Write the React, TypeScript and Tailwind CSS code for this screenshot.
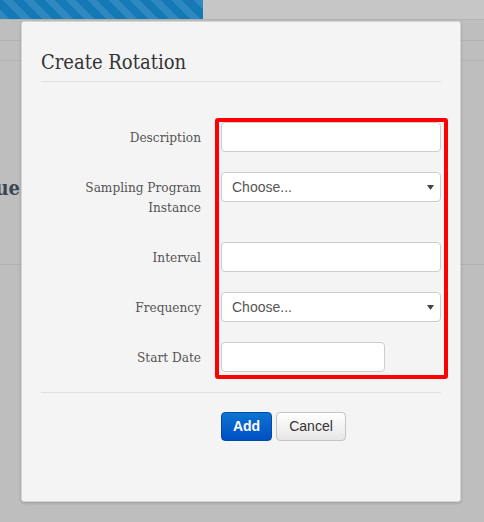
import React from "react";

const serif = "font-['DejaVu_Serif_Condensed','DejaVu_Serif',serif]";

function Select() {
  return (
    <div className="relative h-[30px] w-[220px] rounded-[4px] border border-[#cccccc] bg-white">
      <span className="absolute left-[10px] top-[5px] text-[14px] leading-[18px] text-[#555555] font-['Liberation_Sans',Arial,sans-serif]">
        Choose...
      </span>
      <svg className="absolute right-[6px] top-[11px]" width="7" height="7" viewBox="0 0 7 7">
        <path d="M0 1 L7 1 L3.5 6 Z" fill="#444" />
      </svg>
    </div>
  );
}

function Input({ w = "w-[220px]" }: { w?: string }) {
  return <div className={`h-[30px] ${w} rounded-[4px] border border-[#cccccc] bg-white`} />;
}

function Label({ children }: { children: React.ReactNode }) {
  return (
    <div className={`text-right py-[5px] text-[13.5px] leading-[20px] text-[#555555] ${serif}`}>{children}</div>
  );
}

export default function App() {
  return (
    <div className="relative w-[484px] h-[522px] overflow-hidden bg-[#bebebe]">
      {/* background page */}
      <div className="flex h-[19px]">
        <div className="w-[203px] bg-[repeating-linear-gradient(45deg,#2d89bf_0px,#2d89bf_7px,#1479b4_7px,#1479b4_15px)]" />
        <div className="flex-1 bg-[#c6c6c6]" />
      </div>
      <div className="h-px bg-[#b3b3b3]" />
      <div className="h-[20px]" />
      <div className="h-px bg-[#b3b3b3]" />
      <div className="h-[19px]" />
      <div className="h-px bg-[#b3b3b3]" />
      <div className="h-[203px] pt-[113px]">
        <div className="flex w-[20px] justify-end overflow-visible">
          <span className={`whitespace-nowrap text-[20px] leading-[28px] font-bold text-[#3b4652] ${serif}`}>Que</span>
        </div>
      </div>
      <div className="h-px bg-[#b0b0b0]" />

      {/* modal overlay */}
      <div className="absolute left-[21px] top-[21px] w-[440px] h-[481px] rounded-[3px] border border-[#d6d6d6] bg-[#f4f4f4] shadow-[0_1px_3px_rgba(0,0,0,0.2)] px-[19px] pt-[26px]">
        <div className={`text-[20px] leading-[28px] text-[#333333] ${serif}`}>Create Rotation</div>
        <div className="mt-[5px] h-px bg-[#e0e0e0]" />

        <div className="relative mt-[40px] grid grid-cols-[160px_220px] gap-x-[20px] gap-y-[20px]">
          <Label>Description</Label>
          <Input />
          <Label>
            Sampling Program
            <br />
            Instance
          </Label>
          <Select />
          <Label>Interval</Label>
          <Input />
          <Label>Frequency</Label>
          <Select />
          <Label>Start Date</Label>
          <Input w="w-[164px]" />

          <div className="pointer-events-none absolute left-[174px] top-[-4px] w-[233px] h-[261px] rounded-[3px] border-4 border-[#ff0000]" />
        </div>

        <div className="mt-[20px] h-px bg-[#e0e0e0]" />

        <div className="mt-[19px] ml-[180px] flex gap-[4px] font-['Liberation_Sans',Arial,sans-serif]">
          <button className="h-[29px] w-[51px] rounded-[4px] border border-[#0049aa] bg-[linear-gradient(#0b74d2,#004fc2)] text-[14px] font-bold text-white">
            Add
          </button>
          <button className="h-[29px] w-[70px] rounded-[4px] border border-[#c4c4c4] bg-[linear-gradient(#ffffff,#e6e6e6)] text-[14px] text-[#333333]">
            Cancel
          </button>
        </div>
      </div>
    </div>
  );
}
